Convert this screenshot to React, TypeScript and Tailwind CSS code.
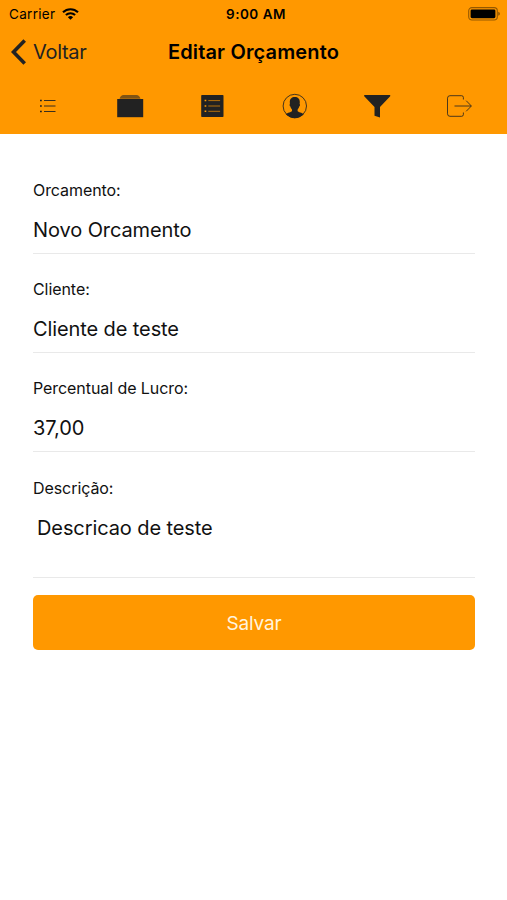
import { useState } from "react";
import type { ReactNode } from "react";

type FieldProps = {
  label: string;
  value: string;
  valueClass: string;
  className: string;
};

const ListIcon = () => (
  <svg className="w-7 h-7" viewBox="0 0 28 28" fill="none" stroke="#222" strokeWidth={0.9}>
    <path d="M10 8.5h11.5M10 14h11.5M10 19.5h11.5" />
    <path d="M6 8.5h1.8M6 14h1.8M6 19.5h1.8" strokeWidth={1.5} />
  </svg>
);

const AlbumsIcon = () => (
  <svg className="w-7 h-7" viewBox="0 0 28 28">
    <path d="M3.5 6.8C4.5 4.2 5.5 3.1 7.5 3.1H20.5C22.5 3.1 23.5 4.2 24.5 6.8Z" fill="#222" fillOpacity={0.58} />
    <path d="M1.2 7h26v18.2h-26z" fill="#222" />
  </svg>
);

const ListBoxIcon = () => (
  <svg className="w-7 h-7" viewBox="0 0 28 28">
    <rect x="3.2" y="3" width="22.3" height="22" rx="0.8" fill="#222" />
    <path d="M10.3 8.6h11.8M10.3 14h11.8M10.3 19.3h11.8" stroke="#ff9800" strokeOpacity={0.75} strokeWidth={0.9} />
    <path d="M6.6 8.6h1.7M6.6 14h1.7M6.6 19.3h1.7" stroke="#ff9800" strokeWidth={1.5} />
  </svg>
);

const ContactIcon = () => (
  <svg className="w-7 h-7" viewBox="0 0 28 28">
    <circle cx="13.8" cy="14" r="11.7" fill="none" stroke="#222" strokeOpacity={0.85} strokeWidth={1} />
    <path
      fill="#222"
      d="M13.8 5.1c3.1 0 5.1 2 5 5 0 1.1-.1 1.5-.2 2 .8.2.5 2.3-.5 2.6-.3 1.4-.9 2-1.5 2.7v1.7c.7 1.3 4.4 1.6 6.2 3.2-2.1 2.4-5.4 3.9-9 3.9s-6.9-1.5-9-3.9c1.8-1.6 5.5-1.9 6.2-3.2v-1.7c-.6-.7-1.2-1.300-1.500-2.700-1-.3-1.300-2.400-.5-2.600-.1-.5-.2-.9-.2-2-.1-3 1.900-5 5-5z"
    />
  </svg>
);

const FunnelIcon = () => (
  <svg className="w-7 h-7" viewBox="0 0 28 28">
    <path d="M1.200 3h26v1.200L17 15v10.600l-5.500-1.900V15L1.200 4.200z" fill="#222" />
  </svg>
);

const ExitIcon = () => (
  <svg className="w-7 h-7" viewBox="0 0 28 28" fill="none" stroke="#222" strokeOpacity={0.85} strokeWidth={0.95}>
    <path d="M18.4 7.5V5.5Q18.4 3.700 16.600 3.700H5Q2.500 3.700 2.500 6.200V21.800Q2.500 24.300 5 24.300H16.600Q18.400 24.300 18.400 22.500V20.500" />
    <path d="M9.500 14h16.700M21.200 8.700l5.200 5.300-5.200 5.300" />
  </svg>
);

const tabs: { title: string; icon: ReactNode }[] = [
  { title: "Itens", icon: <ListIcon /> },
  { title: "Pacotes", icon: <AlbumsIcon /> },
  { title: "Lista", icon: <ListBoxIcon /> },
  { title: "Cliente", icon: <ContactIcon /> },
  { title: "Filtro", icon: <FunnelIcon /> },
  { title: "Sair", icon: <ExitIcon /> },
];

const StatusBar = () => (
  <div className="grid grid-cols-3 items-center h-7 pl-[9px] pr-[7px] text-[13.5px] text-black">
    <div className="flex items-center gap-[7px]">
      <span className="tracking-[0.3px]">Carrier</span>
      <svg className="w-[17px] h-3" viewBox="0 0 17 12" fill="none" stroke="#000" strokeWidth={2.1}>
        <path d="M1 4.300a10.700 10.700 0 0 1 15 0" />
        <path d="M3.900 7.100a6.600 6.600 0 0 1 9.200 0" />
        <path d="M8.500 11.800L5.900 9.300a3.700 3.700 0 0 1 5.200 0z" fill="#000" stroke="none" />
      </svg>
    </div>
    <span className="pl-[3px] text-center font-semibold tracking-[0.5px]">9:00 AM</span>
    <svg className="w-8 h-3.5 justify-self-end" viewBox="0 0 32 14">
      <rect x="0.7" y="0.6" width="28.6" height="12.4" rx="3.2" fill="none" stroke="#000" strokeOpacity={0.42} strokeWidth={1.1} />
      <rect x="2.6" y="2.4" width="24.8" height="8.8" rx="1.4" fill="#000" />
      <path d="M30.300 4.800q1.500.6 1.500 2t-1.500 2z" fill="#000" fillOpacity={0.5} />
    </svg>
  </div>
);

const Field = ({ label, value, valueClass, className }: FieldProps) => (
  <div className={`border-b border-[#e9e9e9] ${className}`}>
    <p className="text-[16px] leading-5 tracking-[-0.07px]">{label}</p>
    <p className={`mt-[18px] text-[20px] leading-6 tracking-[-0.1px] ${valueClass}`}>{value}</p>
  </div>
);

const App = () => {
  const [active, setActive] = useState(0);

  return (
    <div className="min-h-[900px] bg-white text-[#111] font-['Inter','Liberation_Sans',sans-serif]">
      <header className="h-[134px] bg-[#ff9800]">
        <StatusBar />
        <nav className="grid grid-cols-[1fr_auto_1fr] items-center h-12 px-[11px]">
          <button className="flex items-center gap-[7px] text-[20px] tracking-[-0.3px] text-[#222]">
            <svg className="w-[15px] h-[26px]" viewBox="0 0 15 26" fill="none" stroke="#222" strokeWidth={3.6}>
              <path d="M13.700 1.500L2.500 13l11.200 11.500" />
            </svg>
            <span>Voltar</span>
          </button>
          <h1 className="text-[20px] font-semibold tracking-[0.15px] text-black">Editar Orçamento</h1>
        </nav>
        <div className="grid grid-cols-6 items-center h-[60px] px-[7px]">
          {tabs.map((tab, index) => (
            <button
              key={tab.title}
              aria-label={tab.title}
              aria-pressed={active === index}
              onClick={() => setActive(index)}
              className="flex justify-center"
            >
              {tab.icon}
            </button>
          ))}
        </div>
      </header>

      <form className="flex flex-col pl-[33px] pr-8 pt-[46px]" onSubmit={(e) => e.preventDefault()}>
        <Field label="Orcamento:" value="Novo Orcamento" valueClass="" className="h-[74px] mb-[25px]" />
        <Field label="Cliente:" value="Cliente de teste" valueClass="" className="h-[74px] mb-[25px]" />
        <Field label="Percentual de Lucro:" value="37,00" valueClass="" className="h-[74px] mb-[26px]" />
        <Field label="Descrição:" value="Descricao de teste" valueClass="pl-1" className="h-[100px] mb-[17px]" />
        <button type="submit" className="h-[55px] pt-[3px] rounded-[5px] bg-[#ff9800] text-[19px] tracking-[-0.2px] text-[#fff4df]">
          Salvar
        </button>
      </form>
    </div>
  );
};

export default App;
